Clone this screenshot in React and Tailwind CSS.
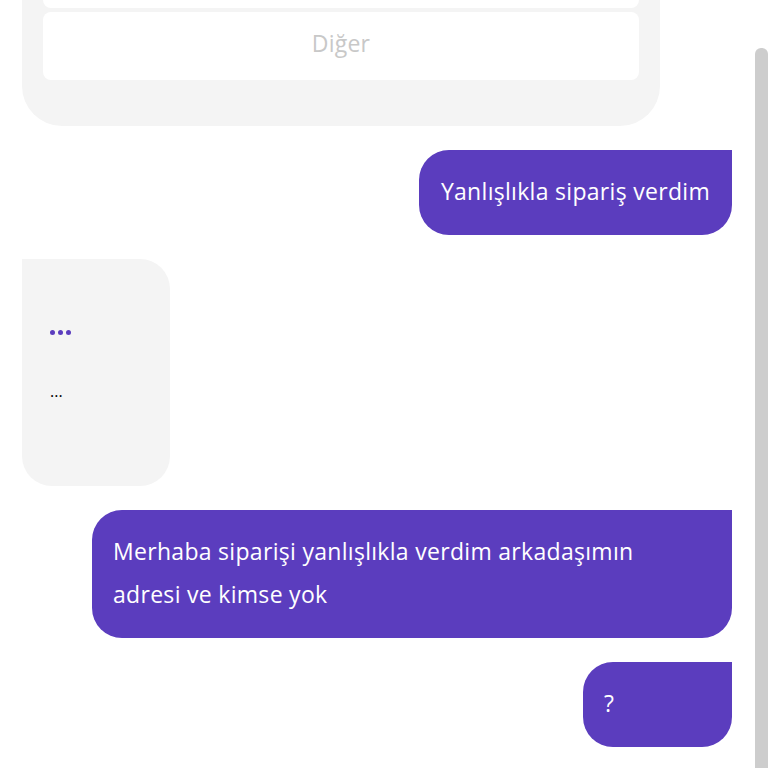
export default function App() {
    const userMessages = [
        'Yanlışlıkla sipariş verdim',
    ];

    return (
        <div className="h-[768px] w-[768px] overflow-hidden bg-white flex" style={{ fontFamily: '"Open Sans", "Noto Sans", sans-serif' }}>
            {/* Chat column */}
            <div className="flex-1 flex flex-col gap-6 pl-[22px] pr-[23px] mt-[-80px]">
                {/* Quick reply card */}
                <div className="w-[638px] bg-[#f4f4f4] rounded-[40px] pt-5 pb-[46px] px-[21px] flex flex-col gap-1">
                    <div className="h-[68px] w-full bg-white rounded-lg"></div>
                    <button className="h-[68px] w-full bg-white rounded-lg text-[23px] leading-[30px] pb-[6px] tracking-[0.2px] text-[#c8c8c8]">
                        Diğer
                    </button>
                </div>

                {userMessages.map((m) => (
                    <div key={m} className="self-end min-w-[148px] bg-[#5b3dbe] text-white text-[23px] tracking-[0.3px] leading-[43px] px-[22px] pt-[20px] pb-[22px] rounded-[30px] rounded-tr-none">
                        {m}
                    </div>
                ))}

                {/* Bot typing bubble */}
                <div className="self-start w-[148px] h-[227px] bg-[#f4f4f4] rounded-[30px] rounded-tl-none px-7 pt-[64px] flex flex-col">
                    <div className="flex gap-[3px] h-[18px] items-center">
                        <span className="w-[5px] h-[5px] rounded-full bg-[#5b3dbe]"></span>
                        <span className="w-[5px] h-[5px] rounded-full bg-[#5b3dbe]"></span>
                        <span className="w-[5px] h-[5px] rounded-full bg-[#5b3dbe]"></span>
                    </div>
                    <div className="mt-[40px] text-[16px] leading-[20px] text-black">...</div>
                </div>

                <div className="self-end w-[640px] bg-[#5b3dbe] text-white text-[23px] tracking-[0.3px] leading-[43px] px-[21px] pt-[20px] pb-[22px] rounded-[30px] rounded-tr-none">
                    Merhaba siparişi yanlışlıkla verdim arkadaşımın<br />adresi ve kimse yok
                </div>

                <div className="self-end w-[149px] bg-[#5b3dbe] text-white text-[23px] leading-[43px] px-[21px] pt-[20px] pb-[22px] rounded-[30px] rounded-tr-none">
                    ?
                </div>
            </div>

            {/* Scrollbar */}
            <div className="w-[13px] pt-[48px] flex flex-col">
                <div className="flex-1 bg-[#cdcdcd] rounded-t-[6px]"></div>
            </div>
        </div>
    );
}
